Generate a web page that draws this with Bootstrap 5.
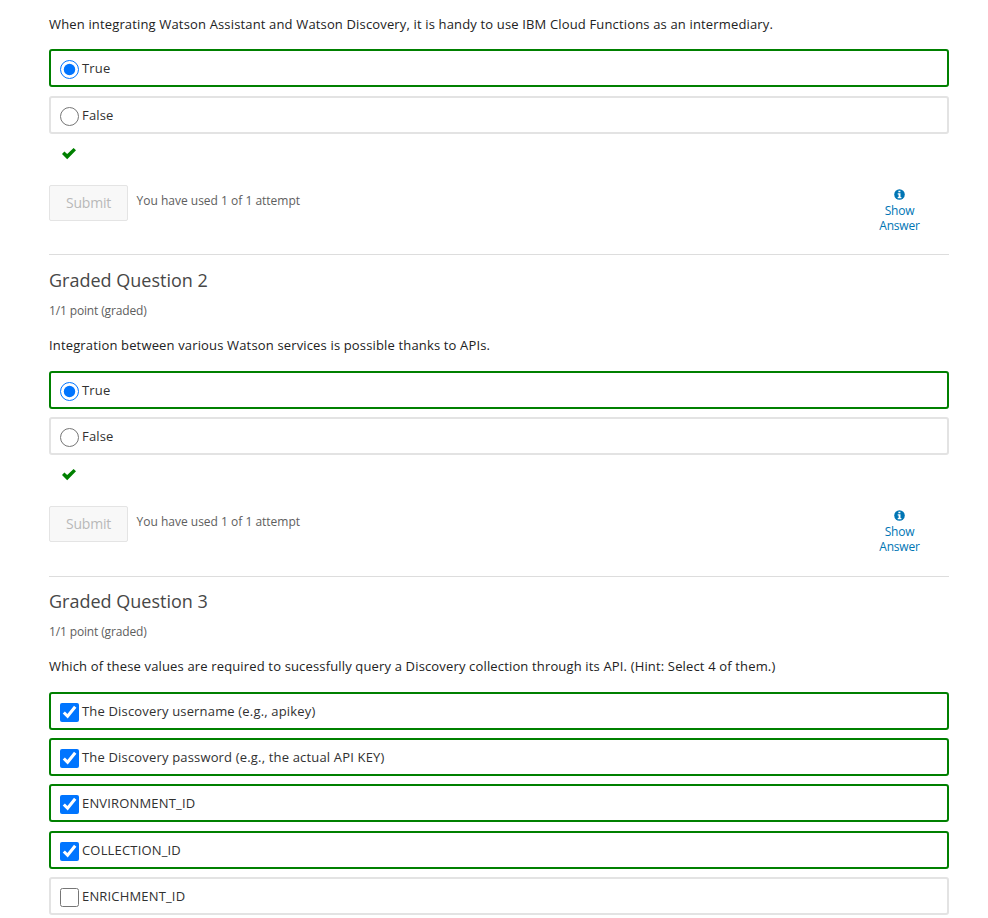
<!DOCTYPE html>
<html lang="en">
<head>
<meta charset="utf-8">
<meta name="viewport" content="width=device-width, initial-scale=1">
<title>Graded Questions</title>
<link href="https://cdn.jsdelivr.net/npm/bootstrap@5.3.0/dist/css/bootstrap.min.css" rel="stylesheet">
<style>
body{font-family:"Open Sans",sans-serif;font-size:13px;line-height:20px;color:#222;background:#fff;overflow:hidden}
.quiz{width:900px;margin-left:49px;padding-top:13.7px}
.problem + .problem{border-top:1px solid #ddd;padding-top:11.6px}
.problem-title{font-size:18px;line-height:26px;font-weight:400;color:#474747;margin:0 0 8px}
.problem-meta{font-size:12px;color:#5e5e5e;margin:0 0 14.1px;letter-spacing:-.14px}
.prompt{margin:0 0 15.7px;letter-spacing:.153px;white-space:nowrap}
.choice{height:38px;margin-bottom:8.25px;border:2px solid #e3e3e3;border-radius:3px;padding:0 0 0 9px;color:#313131;letter-spacing:.17px}
.choice.correct{border-color:green}
.choice input{width:19px;height:19px;margin:3px 3px 0 0;flex:none}
.choice span{line-height:18px}
.status-icon{height:24px;padding:0 0 0 12px;margin-bottom:19.3px}
.submit-btn.btn{width:79px;height:36px;font-size:14px;line-height:20px;color:#b8b8b8;background:#f8f8f8;border:1px solid #e4e4e4;border-radius:2px;padding:0;opacity:1;letter-spacing:-.2px}
.attempts{font-size:12px;color:#5e5e5e;margin:6px 0 0 8.5px}
.problem-actions{height:69.1px}
.show-answer.btn{width:60px;margin:1.8px 19.5px 0 0;padding:0;border:0;font-size:12px;line-height:15px;color:#0075b4;letter-spacing:-.2px}
.show-answer svg{margin-bottom:1.2px}
</style>
</head>
<body>
<main class="quiz">
  <section class="problem">
    <p class="prompt">When integrating Watson Assistant and Watson Discovery, it is handy to use IBM Cloud Functions as an intermediary.</p>
    <label class="choice correct d-flex align-items-center"><input type="radio" name="q1" checked><span>True</span></label>
    <label class="choice d-flex align-items-center"><input type="radio" name="q1"><span>False</span></label>
    <div class="status-icon d-flex align-items-center"><svg width="16" height="14" viewBox="0 0 16 14"><path d="M1 6.9 3.4 4.5 6.2 7.1 12.6 1 15 3.3 6.2 12.3Z" fill="green"/></svg></div>
    <div class="problem-actions d-flex align-items-start">
      <button class="btn submit-btn" disabled>Submit</button>
      <span class="attempts">You have used 1 of 1 attempt</span>
      <button class="btn show-answer ms-auto d-flex flex-column align-items-center"><svg width="15" height="15" viewBox="0 0 15 15"><circle cx="7.5" cy="7.5" r="5.3" fill="#0075b4"/><path d="M6.4 3.7h2v1.6h-2zM5.7 6.3h2.8v3.8h.9v1.1H5.7v-1.1h.9V7.4h-.9z" fill="#fff"/></svg><span>Show</span><span>Answer</span></button>
    </div>
  </section>
  <section class="problem">
    <h2 class="problem-title">Graded Question 2</h2>
    <p class="problem-meta">1/1 point (graded)</p>
    <p class="prompt">Integration between various Watson services is possible thanks to APIs.</p>
    <label class="choice correct d-flex align-items-center"><input type="radio" name="q2" checked><span>True</span></label>
    <label class="choice d-flex align-items-center"><input type="radio" name="q2"><span>False</span></label>
    <div class="status-icon d-flex align-items-center"><svg width="16" height="14" viewBox="0 0 16 14"><path d="M1 6.9 3.4 4.5 6.2 7.1 12.6 1 15 3.3 6.2 12.3Z" fill="green"/></svg></div>
    <div class="problem-actions d-flex align-items-start">
      <button class="btn submit-btn" disabled>Submit</button>
      <span class="attempts">You have used 1 of 1 attempt</span>
      <button class="btn show-answer ms-auto d-flex flex-column align-items-center"><svg width="15" height="15" viewBox="0 0 15 15"><circle cx="7.5" cy="7.5" r="5.3" fill="#0075b4"/><path d="M6.4 3.7h2v1.6h-2zM5.7 6.3h2.8v3.8h.9v1.1H5.7v-1.1h.9V7.4h-.9z" fill="#fff"/></svg><span>Show</span><span>Answer</span></button>
    </div>
  </section>
  <section class="problem">
    <h2 class="problem-title">Graded Question 3</h2>
    <p class="problem-meta">1/1 point (graded)</p>
    <p class="prompt">Which of these values are required to sucessfully query a Discovery collection through its API. (Hint: Select 4 of them.)</p>
    <label class="choice correct d-flex align-items-center"><input type="checkbox" checked><span>The Discovery username (e.g., apikey)</span></label>
    <label class="choice correct d-flex align-items-center"><input type="checkbox" checked><span>The Discovery password (e.g., the actual API KEY)</span></label>
    <label class="choice correct d-flex align-items-center"><input type="checkbox" checked><span>ENVIRONMENT_ID</span></label>
    <label class="choice correct d-flex align-items-center"><input type="checkbox" checked><span>COLLECTION_ID</span></label>
    <label class="choice d-flex align-items-center"><input type="checkbox"><span>ENRICHMENT_ID</span></label>
  </section>
</main>
<script src="https://cdn.jsdelivr.net/npm/bootstrap@5.3.0/dist/js/bootstrap.bundle.min.js"></script>
</body>
</html>
